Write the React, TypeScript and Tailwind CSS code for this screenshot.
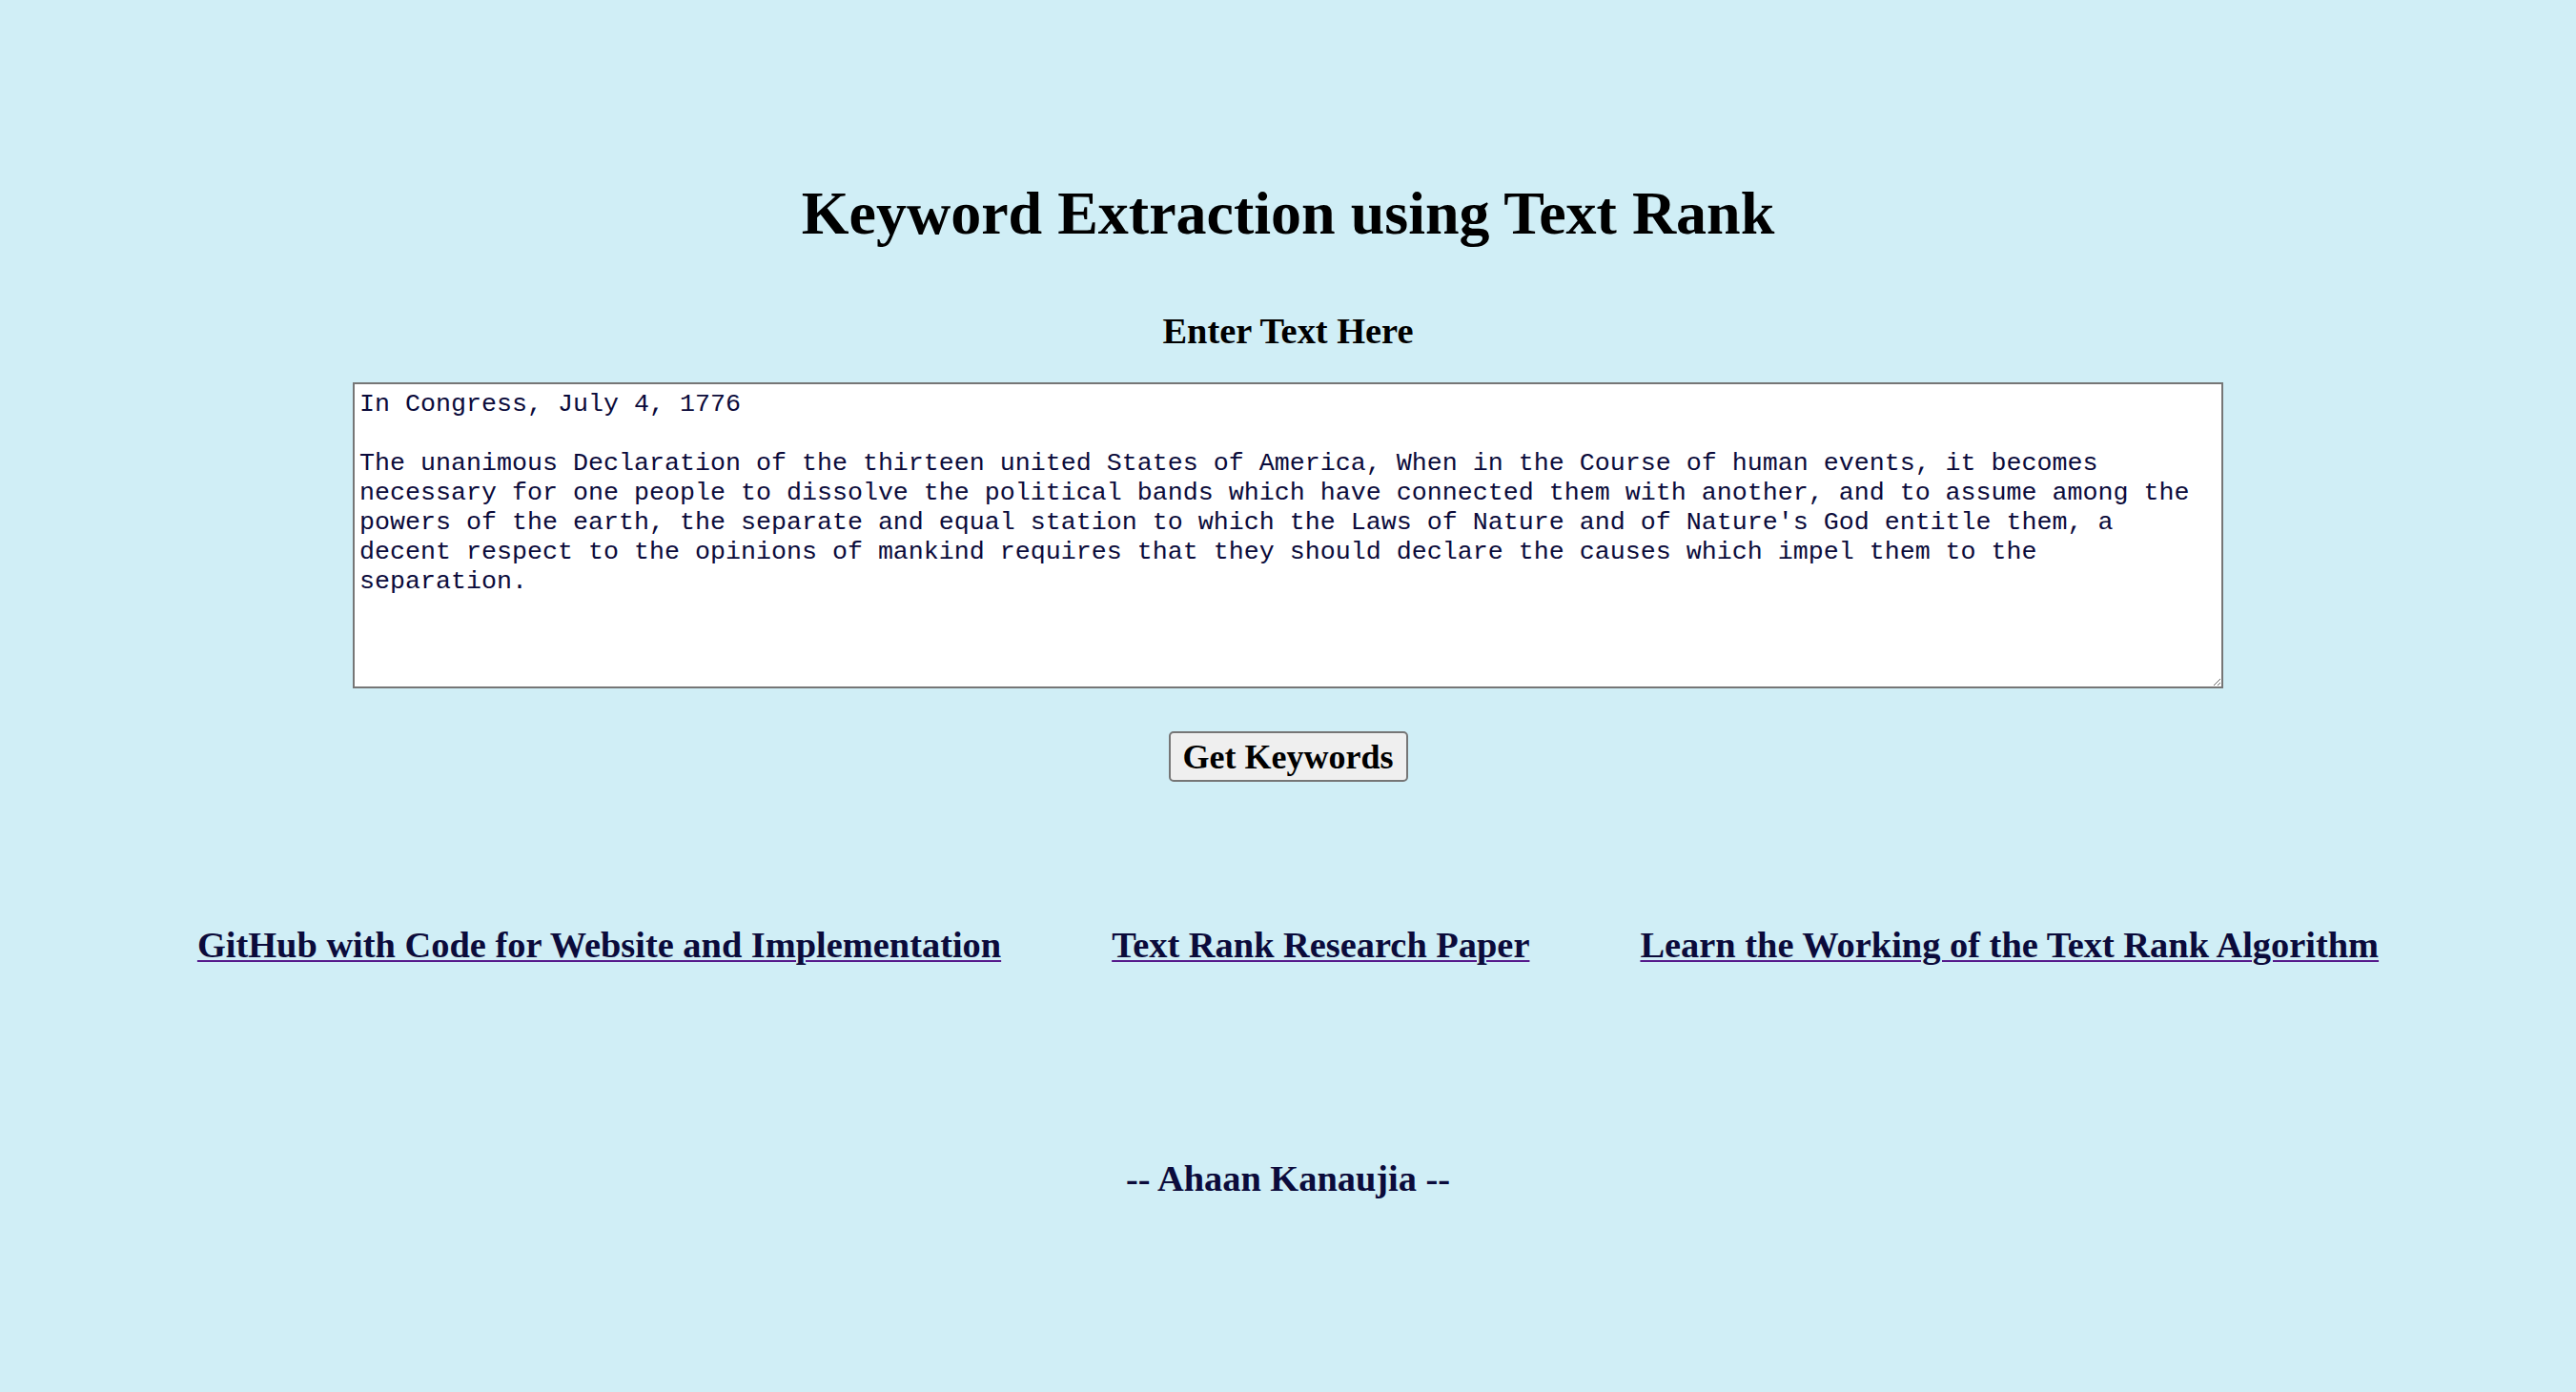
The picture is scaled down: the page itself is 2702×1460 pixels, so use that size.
import { useState } from 'react'

const sampleText = `In Congress, July 4, 1776

The unanimous Declaration of the thirteen united States of America, When in the Course of human events, it becomes necessary for one people to dissolve the political bands which have connected them with another, and to assume among the powers of the earth, the separate and equal station to which the Laws of Nature and of Nature's God entitle them, a decent respect to the opinions of mankind requires that they should declare the causes which impel them to the separation.`

const links = [
  { label: 'GitHub with Code for Website and Implementation', href: '#github' },
  { label: 'Text Rank Research Paper', href: '#paper' },
  { label: 'Learn the Working of the Text Rank Algorithm', href: '#learn' },
]

export default function App() {
  const [text, setText] = useState(sampleText)

  return (
    <div className="min-h-screen bg-[#d0eef6] font-['Liberation_Serif','Times_New_Roman',serif] text-black">
      <div className="flex flex-col items-center">
        {/* title */}
        <h1 className="mt-[192px] text-[64px] leading-[64px] font-bold">Keyword Extraction using Text Rank</h1>

        <h3 className="mt-[72px] text-[38.4px] leading-[38px] font-bold">Enter Text Here</h3>

        <textarea
          value={text}
          onChange={e => setText(e.target.value)}
          className="mt-[35px] box-border w-[1962px] h-[321px] pt-[6px] pb-[4px] pl-[5px] pr-[10px] border-2 border-[#767676] bg-white text-[#0b0b3b] font-['Liberation_Mono','Courier_New',monospace] text-[26.67px] leading-[31px] outline-none"
        />

        <button className="mt-[45px] box-border flex items-center justify-center w-[251px] h-[53px] rounded-[5px] border-2 border-[#767676] bg-[#efefef] text-[36px] leading-none font-bold text-black">
          Get Keywords
        </button>

        {/* links */}
        <div className="mt-[152px] flex justify-center gap-[116px]">
          {links.map(link => (
            <a key={link.href} href={link.href} className="underline decoration-[#551a8b] decoration-2 underline-offset-[3px]">
              <h3 className="text-[38.4px] leading-[38px] font-bold text-[#0b0b3b]">{link.label}</h3>
            </a>
          ))}
        </div>

        <h3 className="mt-[207px] text-[38.4px] leading-[38px] font-bold text-[#0b0b3b]">-- Ahaan Kanaujia --</h3>
      </div>
    </div>
  )
}
